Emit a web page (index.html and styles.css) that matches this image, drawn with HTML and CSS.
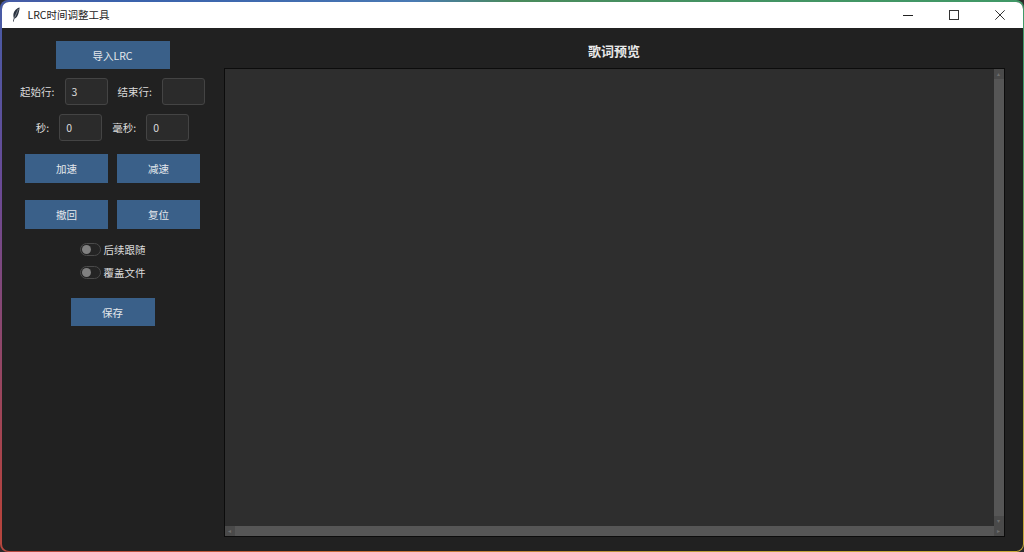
FILE: index.html
```html
<!DOCTYPE html>
<html lang="zh-CN">
<head>
<meta charset="utf-8">
<title>LRC时间调整工具</title>
<link rel="stylesheet" href="styles.css">
</head>
<body>
<div class="window">
  <div class="inner">
    <header class="titlebar">
      <svg class="feather" viewBox="0 0 8 15" width="8" height="15"><path d="M7.6 .4C4.8 1 2 3.6 1.4 7.2 1.2 8.6 1.4 10 1.8 11L.9 14.6l.7.2.9-3.2C5 11.4 7.4 5.4 7.6 .4Z" fill="#2b3340"/><path d="M6.4 2 2.6 10.6" stroke="#c8ccd2" stroke-width=".5"/></svg>
      <span class="app-title">LRC时间调整工具</span>
      <div class="controls">
        <span class="ctl"><svg viewBox="0 0 10 10" width="10" height="10"><path d="M0 5.5h10" stroke="#222" stroke-width="1"/></svg></span>
        <span class="ctl"><svg viewBox="0 0 10 10" width="10" height="10"><rect x=".5" y=".5" width="9" height="9" fill="none" stroke="#333" stroke-width="1"/></svg></span>
        <span class="ctl"><svg viewBox="0 0 10 10" width="10" height="10"><path d="M.3.3l9.4 9.4M9.7.3.3 9.7" stroke="#333" stroke-width="1"/></svg></span>
      </div>
    </header>
    <div class="content">
      <aside class="sidebar">
        <button class="btn btn-import">导入LRC</button>
        <div class="row row-first">
          <label class="lbl">起始行:</label><div class="entry">3</div>
          <label class="lbl">结束行:</label><div class="entry"></div>
        </div>
        <div class="row row-second">
          <label class="lbl">秒:</label><div class="entry">0</div>
          <label class="lbl">毫秒:</label><div class="entry">0</div>
        </div>
        <div class="btn-row btn-row-a">
          <button class="btn btn-half">加速</button>
          <button class="btn btn-half">减速</button>
        </div>
        <div class="btn-row btn-row-b">
          <button class="btn btn-half">撤回</button>
          <button class="btn btn-half">复位</button>
        </div>
        <div class="switch switch-a"><span class="track"><span class="knob"></span></span><span class="switch-text">后续跟随</span></div>
        <div class="switch switch-b"><span class="track"><span class="knob"></span></span><span class="switch-text">覆盖文件</span></div>
        <button class="btn btn-save">保存</button>
      </aside>
      <main class="main">
        <h1 class="preview-title">歌词预览</h1>
        <div class="panel">
          <div class="panel-top">
            <div class="text-area"></div>
            <div class="vscroll"><span class="arrow arrow-top">▴</span><span class="arrow">▾</span></div>
          </div>
          <div class="hscroll"><span class="arrow">◂</span><span class="arrow">▸</span></div>
        </div>
      </main>
    </div>
  </div>
</div>
</body>
</html>
```
FILE: styles.css
```css
* { box-sizing: border-box; }
html, body { margin: 0; height: 100%; background: #2a2a2a; overflow: hidden; }
body { font-family: "Noto Sans CJK SC", "Liberation Sans", sans-serif; }
.window {
  width: 1024px; height: 552px; padding: 1.5px; border-radius: 8px;
  background: conic-gradient(from 0deg at 50% 50%, #4a8a5c 0deg, #3f9a68 70deg, #c9a93a 118deg, #b89a3a 150deg, #c8683a 215deg, #b4433f 245deg, #6a4a96 280deg, #3a62ac 305deg, #4a7ab4 340deg, #4a8a5c 360deg);
}
.inner { height: 100%; display: flex; flex-direction: column; border-radius: 7px; overflow: hidden; background: #212121; }
.titlebar { height: 26px; flex: none; display: flex; align-items: center; background: #fff; padding-left: 10px; }
.feather { flex: none; }
.app-title { margin-left: 8px; font-size: 10.5px; color: #222; }
.controls { margin-left: auto; display: flex; }
.ctl { width: 46px; height: 26px; display: flex; align-items: center; justify-content: center; }
.content { flex: 1; display: flex; min-height: 0; }
.sidebar { width: 222px; flex: none; display: flex; flex-direction: column; align-items: center; padding-top: 13.5px; }
.btn { border: 0; margin: 0; padding: 0; background: #3a6089; color: #e4e8ec; font: 10.5px "Noto Sans CJK SC", "Liberation Sans", sans-serif; }
.btn-import { width: 114px; height: 28px; }
.row { display: flex; align-items: center; gap: 10px; height: 27px; }
.row-first { margin-top: 9px; }
.row-second { margin-top: 9px; }
.lbl { font-size: 10.5px; color: #dcdcdc; white-space: nowrap; }
.entry { width: 43px; height: 27px; border: 1px solid #444; border-radius: 3px; background: #2b2b2b; color: #dcdcdc; font-size: 10.5px; line-height: 25px; padding-left: 6px; }
.btn-row { display: flex; gap: 9px; }
.btn-row-a { margin-top: 13px; }
.btn-row-b { margin-top: 17px; }
.btn-half { width: 83px; height: 29px; }
.switch { display: flex; align-items: center; gap: 3px; height: 13px; }
.switch-a { margin-top: 14px; }
.switch-b { margin-top: 10px; }
.track { width: 21px; height: 13px; border: 1px solid #4a4a4a; border-radius: 7px; display: flex; align-items: center; padding-left: 1px; background: #242424; }
.knob { width: 9px; height: 9px; border-radius: 50%; background: #808080; }
.switch-text { font-size: 10.5px; color: #dcdcdc; }
.btn-save { width: 84px; height: 28px; margin-top: 19px; }
.main { flex: 1; min-width: 0; display: flex; flex-direction: column; padding: 0 18px 13.5px 0; }
.preview-title { margin: 0; height: 40.5px; flex: none; display: flex; align-items: center; justify-content: center; font-size: 13px; font-weight: 700; color: #e8e8e8; padding-top: 5px; }
.panel { flex: 1; min-height: 0; display: flex; flex-direction: column; border: 1px solid #0c0c0c; background: #2e2e2e; }
.panel-top { flex: 1; min-height: 0; display: flex; }
.text-area { flex: 1; }
.vscroll { width: 10px; background: #565656; display: flex; flex-direction: column; justify-content: space-between; }
.hscroll { height: 10px; background: #565656; display: flex; justify-content: space-between; }
.arrow { display: flex; width: 10px; height: 10px; align-items: center; justify-content: center; font-size: 6px; line-height: 1; color: #6e6e6e; background: #4a4a4a; font-family: "DejaVu Sans", sans-serif; }
```
